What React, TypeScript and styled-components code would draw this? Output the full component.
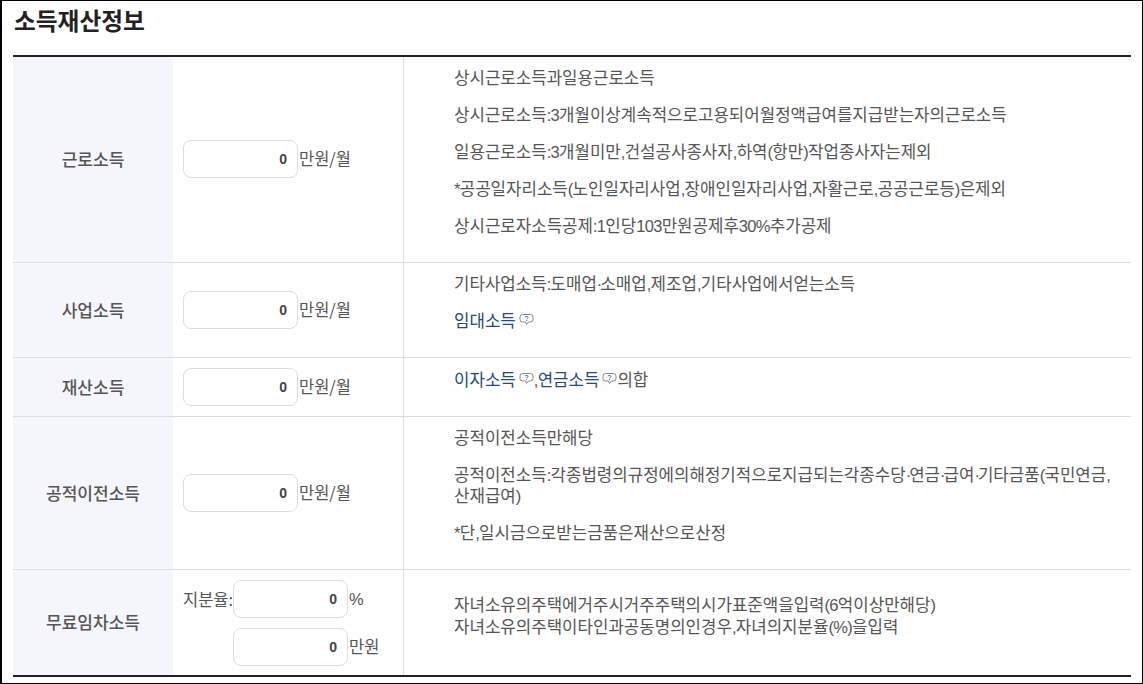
import React from 'react';
import styled, { createGlobalStyle } from 'styled-components';

const GlobalStyle = createGlobalStyle`
  html, body {
    margin: 0;
    padding: 0;
    background: #fff;
  }
  body {
    font-family: 'Noto Sans CJK KR', 'Liberation Sans', sans-serif;
    color: #555;
  }
  * {
    box-sizing: border-box;
  }
`;

const Frame = styled.div`
  width: 1143px;
  height: 684px;
  padding: 0 11px 0 11px;
  border: 1px solid #000;
  border-left-width: 2px;
  overflow: hidden;
`;

const Title = styled.h2`
  height: 54px;
  margin: 0;
  padding: 2px 0 0 1px;
  font-size: 23.7px;
  line-height: 34px;
  font-weight: 700;
  color: #222;
`;

const Table = styled.div`
  border-top: 2px solid #222;
  border-bottom: 2px solid #222;
`;

const Row = styled.div<{ $height: number }>`
  display: grid;
  grid-template-columns: 160px 231px 1fr;
  height: ${(p) => p.$height}px;
  & + & {
    border-top: 1px solid #ddd;
  }
`;

const Head = styled.div`
  display: flex;
  align-items: center;
  justify-content: center;
  padding-bottom: 2px;
  background: #f5f6fb;
  font-size: 17px;
  font-weight: 500;
  color: #555;
`;

const InputCell = styled.div<{ $stacked?: boolean }>`
  display: flex;
  flex-direction: column;
  justify-content: center;
  gap: 10px;
  padding: ${(p) => (p.$stacked ? '1px 0 0 10px' : '0 0 1px 10px')};
  border-right: 1px solid #ddd;
`;

const InputLine = styled.div`
  display: flex;
  align-items: center;
`;

const Prefix = styled.span`
  flex: none;
  width: 50px;
  font-size: 16.5px;
  white-space: nowrap;
  color: #555;
`;

const Amount = styled.div`
  flex: none;
  width: 115px;
  height: 38px;
  padding-right: 10px;
  border: 1px solid #ddd;
  border-radius: 8px;
  background: #fff;
  font-family: 'Liberation Sans', sans-serif;
  font-size: 14px;
  font-weight: 700;
  line-height: 36px;
  text-align: right;
  color: #444;
`;

const Unit = styled.span`
  margin-left: 1px;
  padding-bottom: 2px;
  font-size: 16.5px;
  color: #555;
`;

const Desc = styled.div<{ $top: number; $gap?: number }>`
  padding: ${(p) => p.$top}px 20px 0 50px;
  font-size: 16.8px;
  line-height: 21px;
  color: #555;
  p {
    margin: 0 0 ${(p) => p.$gap ?? 16}px;
  }
`;

// digits and punctuation run narrower than the hangul in the reference
const Narrow = styled.span`
  font-family: 'Liberation Sans', sans-serif;
  font-size: 16.5px;
  line-height: 1;
  letter-spacing: -0.7px;
`;

const Dot = styled(Narrow)`
  letter-spacing: -2px;
`;

const Mixed = ({ text }: { text: string }) => (
  <>
    {text.split(/(·|[\u0020-\u007e]+)/).map((part, i) => {
      if (i % 2 === 0) return part;
      return part === '·' ? <Dot key={i}>{part}</Dot> : <Narrow key={i}>{part}</Narrow>;
    })}
  </>
);

const Term = styled.span`
  color: #24497c;
`;

const HelpIcon = styled.svg`
  margin: 0 0 0 3px;
  vertical-align: 0;
`;

const HelpMark = () => (
  <HelpIcon width="15" height="14" viewBox="0 0 15 14">
    <path
      d="M3.5 1.5h8a2.5 2.5 0 0 1 2.5 2.5v2.5a2.5 2.5 0 0 1-2.5 2.5h-2l-2 2.5-1-2.5h-3a2.5 2.5 0 0 1-2.5-2.5v-2.5a2.5 2.5 0 0 1 2.5-2.5z"
      fill="#fff"
      stroke="#888"
    />
    <path d="M6 4.2c.4-1 3-1 3 .3 0 .9-1.4 1-1.4 1.8" fill="none" stroke="#1f6f9f" />
    <circle cx="7.6" cy="7.6" r=".6" fill="#1f6f9f" />
  </HelpIcon>
);

function App() {
  return (
    <Frame>
      <GlobalStyle />
      <Title>소득재산정보</Title>
      <Table>
        <Row $height={205}>
          <Head>근로소득</Head>
          <InputCell>
            <InputLine>
              <Amount>0</Amount>
              <Unit>만원/월</Unit>
            </InputLine>
          </InputCell>
          <Desc $top={10}>
            <p>상시근로소득과일용근로소득</p>
            <p><Mixed text="상시근로소득:3개월이상계속적으로고용되어월정액급여를지급받는자의근로소득" /></p>
            <p><Mixed text="일용근로소득:3개월미만,건설공사종사자,하역(항만)작업종사자는제외" /></p>
            <p><Mixed text="*공공일자리소득(노인일자리사업,장애인일자리사업,자활근로,공공근로등)은제외" /></p>
            <p><Mixed text="상시근로자소득공제:1인당103만원공제후30%추가공제" /></p>
          </Desc>
        </Row>
        <Row $height={95}>
          <Head>사업소득</Head>
          <InputCell>
            <InputLine>
              <Amount>0</Amount>
              <Unit>만원/월</Unit>
            </InputLine>
          </InputCell>
          <Desc $top={10}>
            <p><Mixed text="기타사업소득:도매업·소매업,제조업,기타사업에서얻는소득" /></p>
            <p>
              <Term>임대소득</Term>
              <HelpMark />
            </p>
          </Desc>
        </Row>
        <Row $height={59}>
          <Head>재산소득</Head>
          <InputCell>
            <InputLine>
              <Amount>0</Amount>
              <Unit>만원/월</Unit>
            </InputLine>
          </InputCell>
          <Desc $top={11}>
            <p>
              <Term>이자소득</Term>
              <HelpMark />
              <Narrow>,</Narrow>
              <Term>연금소득</Term>
              <HelpMark />의합
            </p>
          </Desc>
        </Row>
        <Row $height={153}>
          <Head>공적이전소득</Head>
          <InputCell>
            <InputLine>
              <Amount>0</Amount>
              <Unit>만원/월</Unit>
            </InputLine>
          </InputCell>
          <Desc $top={10}>
            <p>공적이전소득만해당</p>
            <p>
              <Mixed text="공적이전소득:각종법령의규정에의해정기적으로지급되는각종수당·연금·급여·기타금품(국민연금," />
              <br />
              <Mixed text="산재급여)" />
            </p>
            <p><Mixed text="*단,일시금으로받는금품은재산으로산정" /></p>
          </Desc>
        </Row>
        <Row $height={106}>
          <Head>무료임차소득</Head>
          <InputCell $stacked>
            <InputLine>
              <Prefix>지분율:</Prefix>
              <Amount>0</Amount>
              <Unit><Narrow>%</Narrow></Unit>
            </InputLine>
            <InputLine>
              <Prefix />
              <Amount>0</Amount>
              <Unit>만원</Unit>
            </InputLine>
          </InputCell>
          <Desc $top={24} $gap={1}>
            <p><Mixed text="자녀소유의주택에거주시거주주택의시가표준액을입력(6억이상만해당)" /></p>
            <p><Mixed text="자녀소유의주택이타인과공동명의인경우,자녀의지분율(%)을입력" /></p>
          </Desc>
        </Row>
      </Table>
    </Frame>
  );
}

export default App;
